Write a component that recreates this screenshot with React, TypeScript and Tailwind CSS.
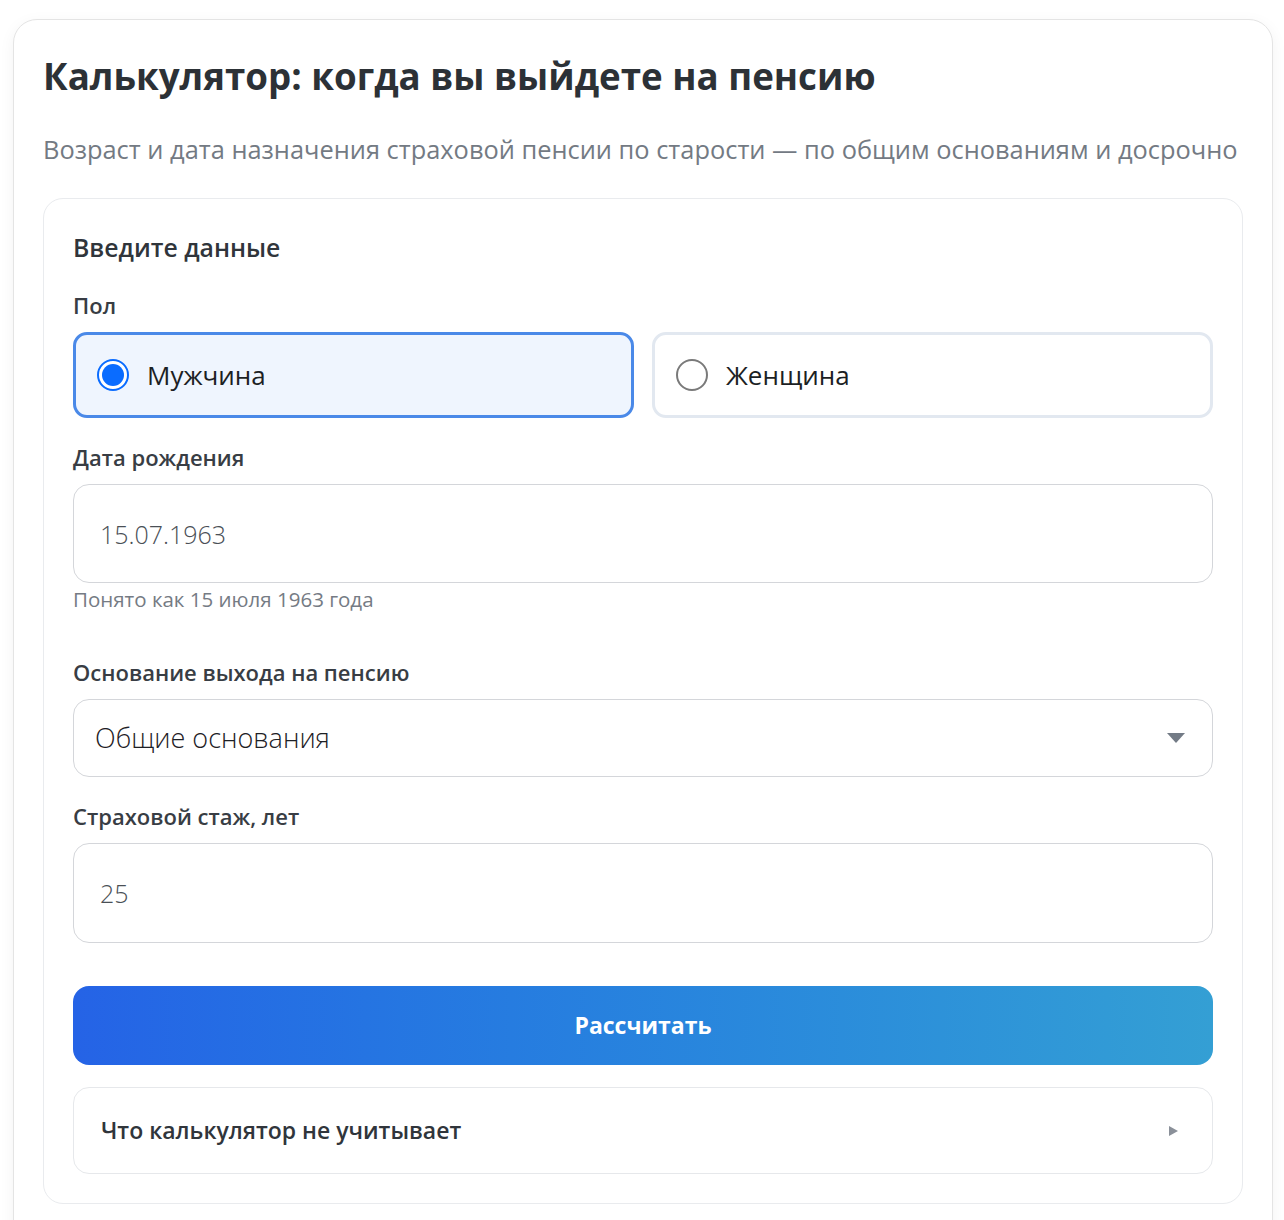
import { useState } from "react";

const FONT = "font-['Open_Sans','Noto_Sans',sans-serif]";

function GenderOption({
  label,
  checked,
  onSelect,
}: {
  label: string;
  checked: boolean;
  onSelect: () => void;
}) {
  return (
    <button
      type="button"
      onClick={onSelect}
      className={
        checked
          ? "flex h-[86px] items-center gap-[18px] rounded-[14px] border-[3px] border-[#4a89e8] bg-[#eff5fe] pl-[21px] text-left"
          : "flex h-[86px] items-center gap-[18px] rounded-[14px] border-[3px] border-[#e2e8f0] bg-white pl-[21px] text-left"
      }
    >
      {checked ? (
        <span className="flex h-[32px] w-[32px] items-center justify-center rounded-full border-[2px] border-[#0a6cff] bg-white">
          <span className="h-[22px] w-[22px] rounded-full bg-[#0a6cff]" />
        </span>
      ) : (
        <span className="h-[32px] w-[32px] rounded-full border-[2px] border-[#7a7a7a] bg-white" />
      )}
      <span className="text-[26px] leading-none text-[#1c1f24]">{label}</span>
    </button>
  );
}

function FieldLabel({ children }: { children: React.ReactNode }) {
  return <div className="mb-[12px] text-[22px] font-semibold leading-[29px] text-[#383d44]">{children}</div>;
}

export default function App() {
  const [gender, setGender] = useState<"m" | "f">("m");
  const [birth, setBirth] = useState("15.07.1963");
  const [basis, setBasis] = useState("general");
  const [years, setYears] = useState("25");
  const [open, setOpen] = useState(false);

  return (
    <div className={`min-h-screen bg-white pt-[19px] pl-[13px] ${FONT}`}>
      <div className="w-[1260px] rounded-[24px] border border-[#e4e4e4] bg-white px-[29px] pt-[33px] pb-[40px] shadow-[0_4px_16px_rgba(0,0,0,0.05)]">
        <h1 className="text-[36.7px] font-bold leading-[46px] text-[#2c3136]">Калькулятор: когда вы выйдете на пенсию</h1>
        <p className="mt-[31px] whitespace-nowrap text-[25.4px] leading-[39px] text-[#737a83]">
          Возраст и дата назначения страховой пенсии по старости — по общим основаниям и досрочно
        </p>

        <div className="mt-[29px] rounded-[20px] border border-[#e9ebee] bg-white px-[29px] pt-[33px] pb-[29px]">
          <h2 className="text-[24.8px] font-semibold leading-[31px] text-[#30353b]">Введите данные</h2>

          <div className="mt-[28px]">
            <FieldLabel>Пол</FieldLabel>
            <div className="grid grid-cols-2 gap-[18px]">
              <GenderOption label="Мужчина" checked={gender === "m"} onSelect={() => setGender("m")} />
              <GenderOption label="Женщина" checked={gender === "f"} onSelect={() => setGender("f")} />
            </div>
          </div>

          <div className="mt-[25px]">
            <FieldLabel>Дата рождения</FieldLabel>
            <input
              value={birth}
              onChange={(e) => setBirth(e.target.value)}
              className="h-[99px] w-full rounded-[16px] border border-[#d4d6da] bg-white px-[26px] text-[25px] font-light text-[#4a4f56] outline-none"
            />
            <div className="mt-[2px] text-[20.5px] leading-[28px] text-[#757b84]">Понято как 15 июля 1963 года</div>
          </div>

          <div className="mt-[45px]">
            <FieldLabel>Основание выхода на пенсию</FieldLabel>
            <div className="relative">
              <select
                value={basis}
                onChange={(e) => setBasis(e.target.value)}
                className="h-[78px] w-full appearance-none rounded-[16px] border border-[#d4d6da] bg-white pl-[21px] text-[27px] font-light text-[#1d2025] outline-none"
              >
                <option value="general">Общие основания</option>
                <option value="early">Досрочно</option>
              </select>
              <svg
                className="pointer-events-none absolute right-[28px] top-[34px]"
                width="18"
                height="10"
                viewBox="0 0 18 10"
              >
                <path d="M0 0h18L9 10z" fill="#737b86" />
              </svg>
            </div>
          </div>

          <div className="mt-[25px]">
            <FieldLabel>Страховой стаж, лет</FieldLabel>
            <input
              value={years}
              onChange={(e) => setYears(e.target.value)}
              className="h-[100px] w-full rounded-[16px] border border-[#d4d6da] bg-white px-[26px] text-[25px] font-light text-[#4a4f56] outline-none"
            />
          </div>

          <button
            type="button"
            className="mt-[43px] h-[79px] w-full rounded-[16px] bg-gradient-to-r from-[#2563e6] to-[#349fd4] text-[23px] font-bold text-white"
          >
            Рассчитать
          </button>

          <div className="mt-[22px] rounded-[16px] border border-[#e6e8eb] bg-white">
            <button
              type="button"
              onClick={() => setOpen(!open)}
              className="flex h-[85px] w-full items-center justify-between pl-[27px] pr-[34px] text-left"
            >
              <span className="text-[23px] font-semibold text-[#30353b]">Что калькулятор не учитывает</span>
              <svg width="9" height="10" viewBox="0 0 9 10" className={open ? "rotate-90" : ""}>
                <path d="M0 0l9 5-9 5z" fill="#8a9099" />
              </svg>
            </button>
          </div>
        </div>
      </div>
    </div>
  );
}
